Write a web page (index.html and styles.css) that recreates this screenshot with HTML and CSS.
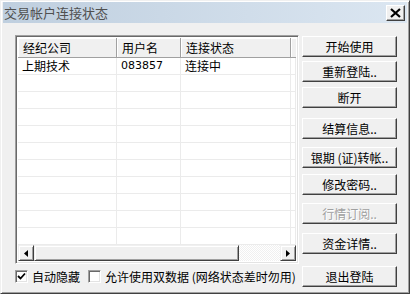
FILE: index.html
```html
<!DOCTYPE html>
<html lang="zh-CN">
<head>
  <meta charset="UTF-8">
  <title>交易帐户连接状态</title>
  <link rel="stylesheet" href="styles.css">
</head>
<body>
  <div class="window">
    <div class="titlebar">
      <span class="title">交易帐户连接状态</span>
      <div class="close-btn">
        <svg width="11" height="10" viewBox="0 0 11 10"><path d="M1 1 L10 9 M10 1 L1 9" stroke="#000" stroke-width="2.2"/></svg>
      </div>
    </div>

    <div class="content">
      <div class="left">
        <div class="listbox">
          <div class="list-head">
            <div class="hcell c1">经纪公司</div>
            <div class="hcell c2">用户名</div>
            <div class="hcell c3">连接状态</div>
            <div class="hcell c4"></div>
          </div>
          <div class="list-body" id="listBody"></div>
          <div class="hscroll">
            <div class="sbtn"><svg width="4" height="7" viewBox="0 0 4 7"><path d="M4 0 L0 3.5 L4 7 Z" fill="#000"/></svg></div>
            <div class="thumb"></div>
            <div class="track"></div>
            <div class="sbtn"><svg width="4" height="7" viewBox="0 0 4 7"><path d="M0 0 L4 3.5 L0 7 Z" fill="#000"/></svg></div>
          </div>
        </div>

        <div class="options">
          <label class="check">
            <span class="box checked">
              <svg width="9" height="9" viewBox="0 0 9 9"><path d="M1 4 L3.5 6.5 L8 1.5" stroke="#000" stroke-width="1.8" fill="none"/></svg>
            </span>
            自动隐藏
          </label>
          <label class="check">
            <span class="box"></span>
            允许使用双数据 (网络状态差时勿用)
          </label>
        </div>
      </div>

      <div class="buttons">
        <div class="btn b1">开始使用</div>
        <div class="btn b2">重新登陆..</div>
        <div class="btn b3">断开</div>
        <div class="btn b4">结算信息..</div>
        <div class="btn b5">银期 (证)转帐..</div>
        <div class="btn b6">修改密码..</div>
        <div class="btn b7 disabled">行情订阅..</div>
        <div class="btn b8">资金详情..</div>
        <div class="btn b9">退出登陆</div>
      </div>
    </div>
  </div>

  <script>
    const rows = [
      { broker: '上期技术', user: '083857', state: '连接中' }
    ];
    const body = document.getElementById('listBody');
    for (let i = 0; i < 12; i++) {
      const r = rows[i] || { broker: '', user: '', state: '' };
      const div = document.createElement('div');
      div.className = 'row';
      div.innerHTML = `
        <div class="cell c1">${r.broker}</div>
        <div class="cell c2 num">${r.user}</div>
        <div class="cell c3">${r.state}</div>
        <div class="cell c4"></div>
      `;
      body.appendChild(div);
    }
  </script>
</body>
</html>
```

FILE: styles.css
```css
body {
  margin: 0;
  background: #f0f0f0;
  font-family: "Noto Sans CJK SC", "DejaVu Sans", sans-serif;
  font-size: 12px;
  color: #000;
}
.window {
  width: 410px;
  height: 294px;
  box-sizing: border-box;
  border: 1px solid;
  border-color: #f0f0f0 #404040 #404040 #f0f0f0;
  box-shadow: inset 1px 1px #fff, inset -1px -1px #a0a0a0;
  padding: 1px 2px 0 1px;
  background: #f0f0f0;
}
.titlebar {
  height: 21px;
  margin-left: 1px;
  display: flex;
  justify-content: space-between;
  align-items: center;
  padding: 0 2px 0 1px;
  background: linear-gradient(to right, #bfcfdf, #dbe6f1);
}
.title {
  font-size: 13px;
  color: #505050;
  line-height: 21px;
}
.close-btn {
  width: 19px;
  height: 16px;
  box-sizing: border-box;
  background: #f0f0f0;
  border: 1px solid;
  border-color: #fff #404040 #404040 #fff;
  box-shadow: inset -1px -1px #a0a0a0;
  display: flex;
  align-items: center;
  justify-content: center;
}
.content {
  display: flex;
  gap: 3px;
  padding: 12px 0 0 13px;
}
.listbox {
  width: 284px;
  height: 229px;
  box-sizing: border-box;
  border: 1px solid;
  border-color: #a0a0a0 #fff #fff #a0a0a0;
  box-shadow: inset 1px 1px #696969, inset -1px -1px #e3e3e3;
  padding: 2px 2px 2px 2px;
  background: #fff;
  display: flex;
  flex-direction: column;
}
.list-head {
  display: flex;
  height: 19px;
  background: #f0f0f0;
  border-bottom: 1px solid #a0a0a0;
}
.hcell {
  box-sizing: border-box;
  padding-left: 5px;
  line-height: 19px;
  border-right: 1px solid #a0a0a0;
  box-shadow: inset 1px 1px #fff;
}
.c1 { width: 99px; }
.c2 { width: 64px; }
.c3 { width: 110px; }
.c4 { flex: 1; border-right: none; }
.list-body {
  flex: 1;
  overflow: hidden;
}
.row {
  display: flex;
  height: 16px;
  border-bottom: 1px solid #ebebeb;
}
.cell {
  box-sizing: border-box;
  padding-left: 4px;
  line-height: 16px;
  border-right: 1px solid #ebebeb;
}
.cell.num {
  font-family: "DejaVu Sans", sans-serif;
  font-size: 11px;
}
.hscroll {
  display: flex;
  height: 16px;
}
.sbtn {
  width: 16px;
  box-sizing: border-box;
  background: #f0f0f0;
  border: 1px solid;
  border-color: #f0f0f0 #404040 #404040 #f0f0f0;
  box-shadow: inset 1px 1px #fff, inset -1px -1px #a0a0a0;
  display: flex;
  align-items: center;
  justify-content: center;
}
.thumb {
  width: 205px;
  box-sizing: border-box;
  background: #f0f0f0;
  border: 1px solid;
  border-color: #f0f0f0 #404040 #404040 #f0f0f0;
  box-shadow: inset 1px 1px #fff, inset -1px -1px #a0a0a0;
}
.track {
  flex: 1;
  background-color: #f0f0f0;
  background-image: repeating-conic-gradient(#fff 0 25%, #f0f0f0 0 50%);
  background-size: 2px 2px;
}
.options {
  display: flex;
  gap: 8px;
  margin-top: 4px;
  height: 16px;
  align-items: center;
}
.check {
  display: flex;
  align-items: center;
  gap: 4px;
}
.box {
  width: 13px;
  height: 13px;
  box-sizing: border-box;
  background: #fff;
  border: 1px solid;
  border-color: #a0a0a0 #fff #fff #a0a0a0;
  box-shadow: inset 1px 1px #696969, inset -1px -1px #e3e3e3;
  display: flex;
  align-items: center;
  justify-content: center;
}
.buttons {
  width: 95px;
  display: flex;
  flex-direction: column;
}
.btn {
  height: 21px;
  box-sizing: border-box;
  background: #f0f0f0;
  border: 1px solid;
  border-color: #fff #404040 #404040 #fff;
  box-shadow: inset -1px -1px #a0a0a0;
  text-align: center;
  line-height: 19px;
}
.btn.disabled {
  color: #a0a0a0;
  text-shadow: 1px 1px #fff;
}
.b1 { margin-top: 1px; }
.b2 { margin-top: 4px; }
.b3 { margin-top: 5px; }
.b4 { margin-top: 10px; }
.b5 { margin-top: 8px; }
.b6 { margin-top: 6px; }
.b7 { margin-top: 8px; }
.b8 { margin-top: 9px; }
.b9 { margin-top: 12px; }
```
